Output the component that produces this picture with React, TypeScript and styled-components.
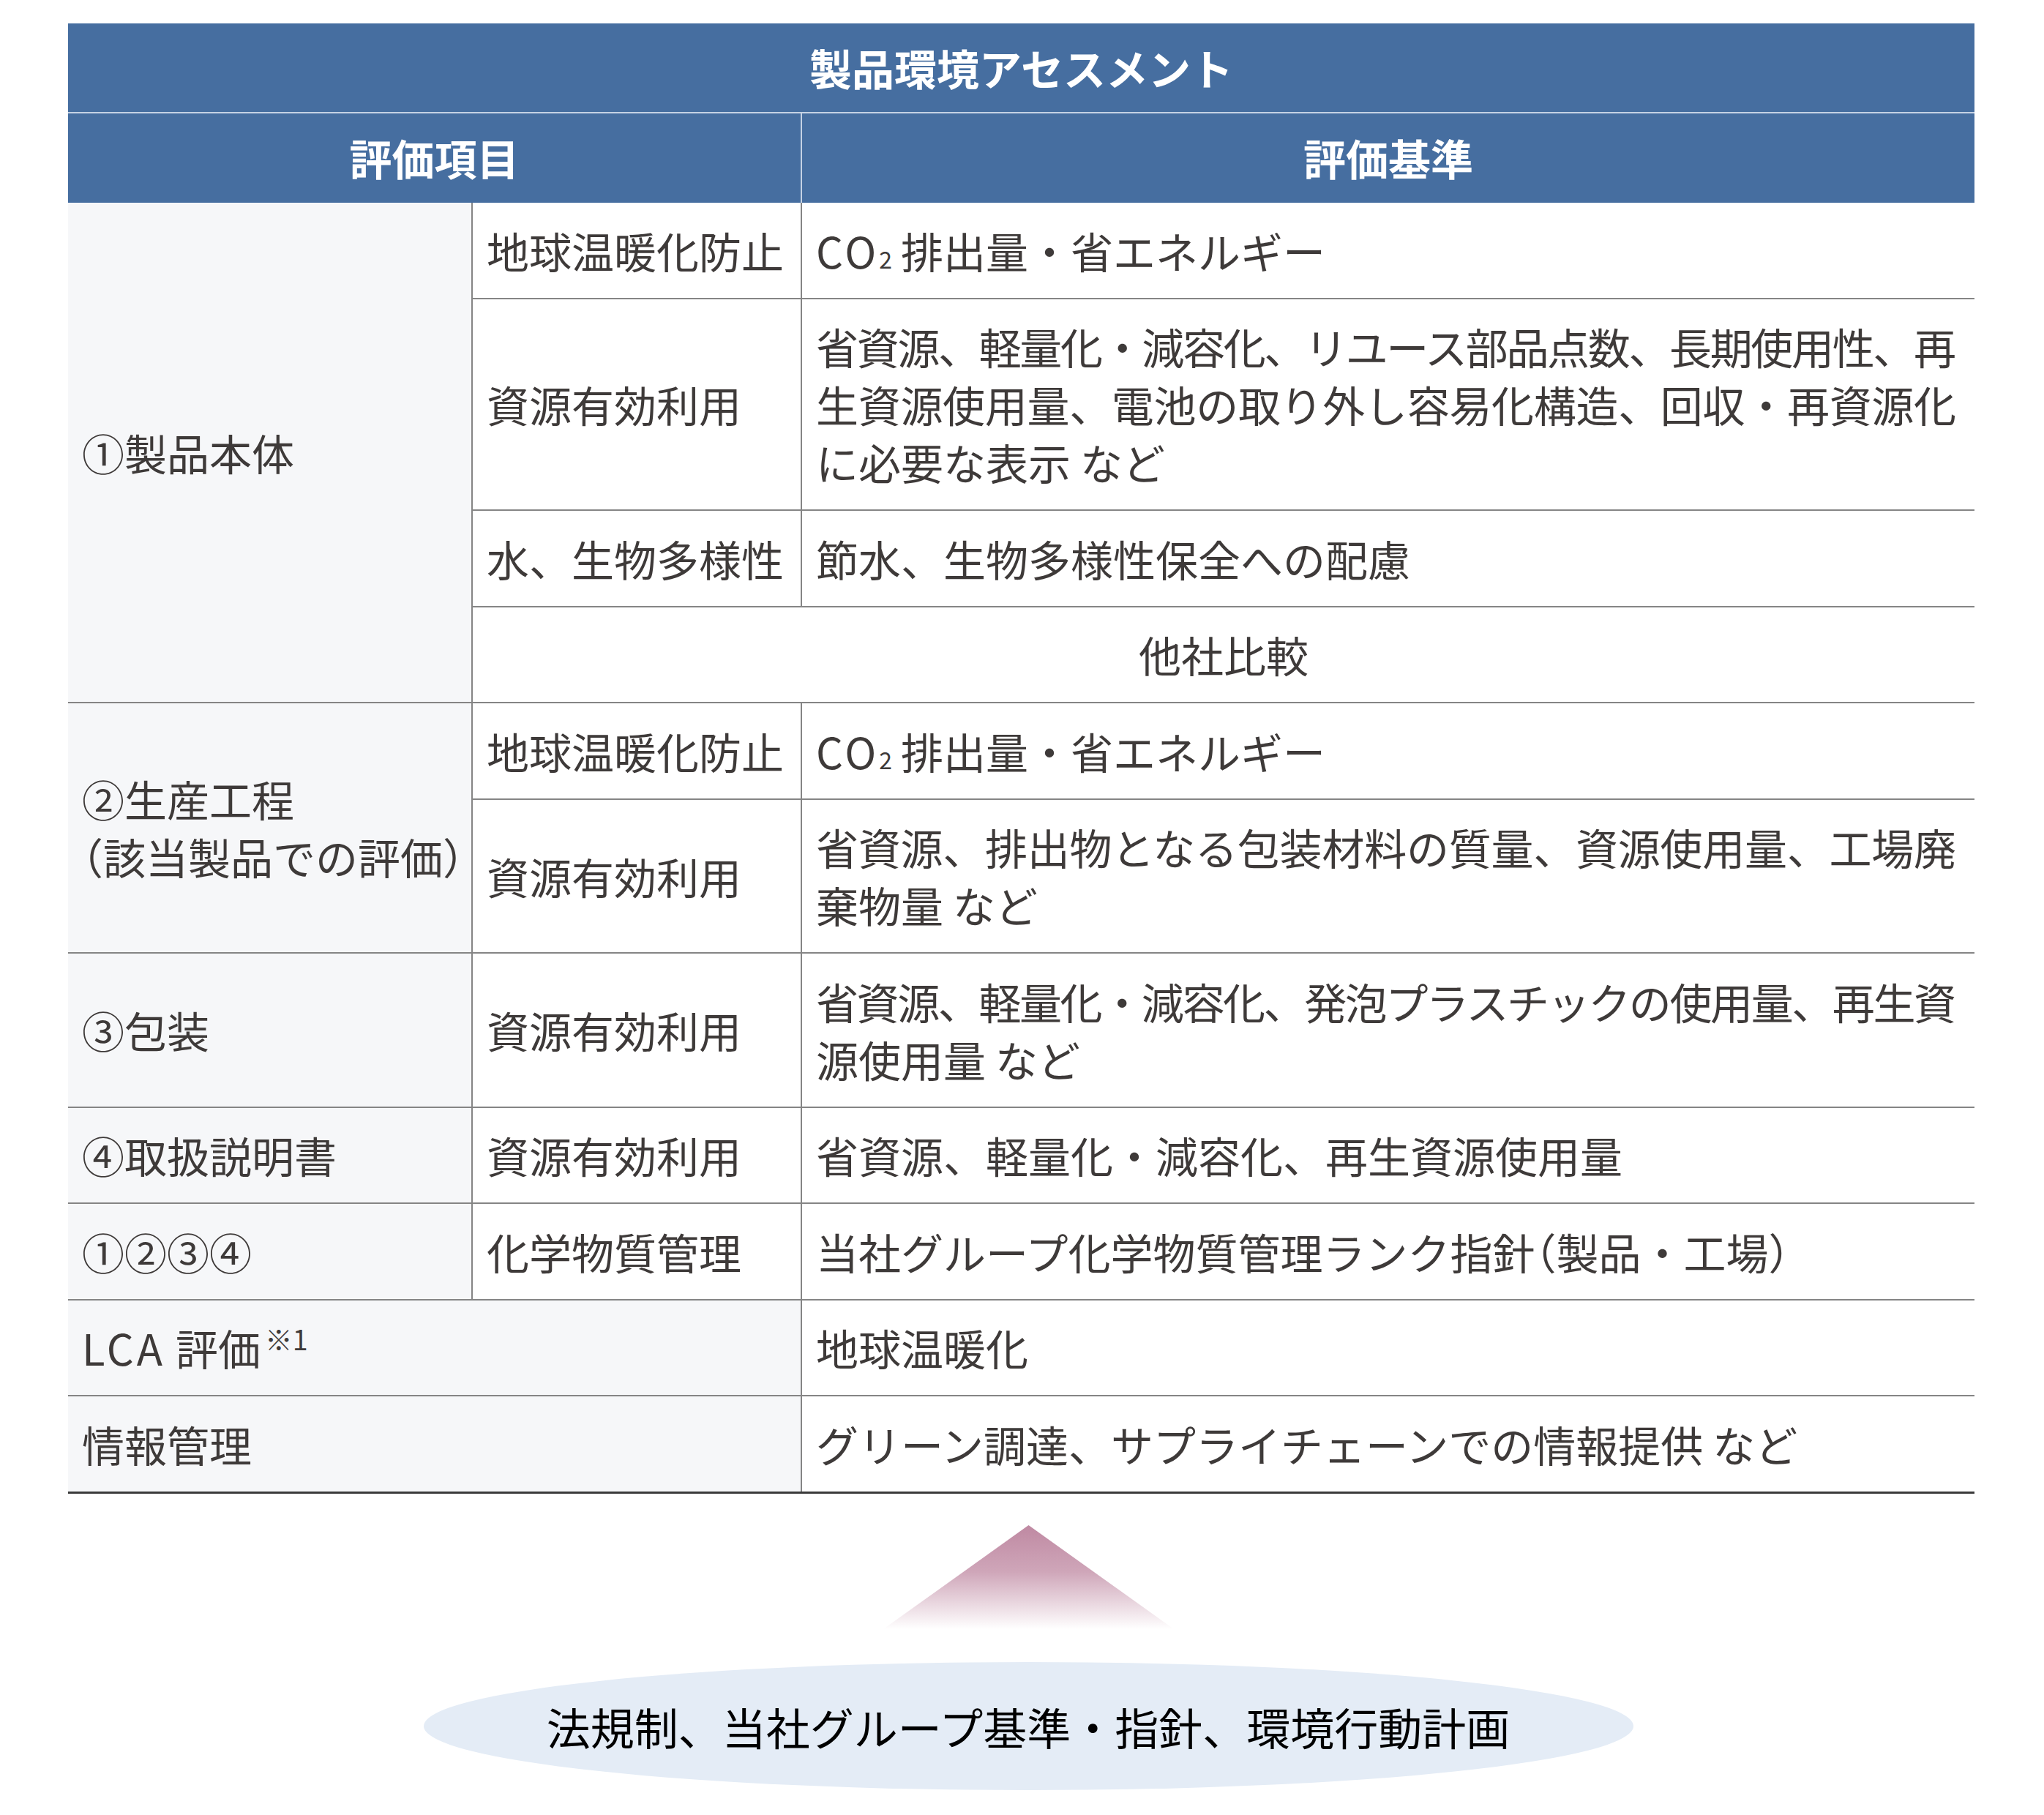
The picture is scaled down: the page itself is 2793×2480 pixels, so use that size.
import styled, { createGlobalStyle, css } from "styled-components";

const GlobalStyle = createGlobalStyle`
  html, body {
    margin: 0;
    padding: 0;
    background: #ffffff;
  }
  body {
    font-family: "Noto Sans CJK JP", "Noto Sans", sans-serif;
    color: #3e3a39;
  }
`;

const Page = styled.div`
  width: 2793px;
  box-sizing: border-box;
  padding: 32px 0 34px 93px;
`;

const Table = styled.table`
  width: 2605px;
  table-layout: fixed;
  border-collapse: collapse;
  font-size: 58px;
  line-height: 79px;
`;

const HeadCell = styled.th<{ $first?: boolean; $divider?: boolean }>`
  background: #466ea0;
  color: #ffffff;
  font-weight: 700;
  text-align: center;
  padding: ${(p) => (p.$first ? "21px 0" : "21px 0 22px")};
  border-bottom: ${(p) => (p.$first ? "2px solid #c5d2e4" : "0")};
  border-left: ${(p) => (p.$divider ? "2px solid #c5d2e4" : "0")};
`;

const Row = styled.tr`
  &:last-child > td {
    border-bottom: 3px solid #3a3a3a;
  }
`;

// 評価項目の左列（薄いグレー）
const GroupCell = styled.td`
  background: #f6f7f9;
  padding: 25.5px 2px 25px 19px;
  vertical-align: middle;
  text-align: left;
  white-space: nowrap;
  border-bottom: 2px solid #858585;
`;

// 評価項目の中列
const ItemCell = styled.td`
  background: #ffffff;
  padding: 25.5px 4px 25px 19px;
  vertical-align: middle;
  text-align: left;
  white-space: nowrap;
  border-bottom: 2px solid #858585;
  border-left: 2px solid #858585;
`;

const Cell = styled.td<{ $center?: boolean }>`
  background: #ffffff;
  padding: ${(p) => (p.$center ? "25.5px 19px 25px" : "25.5px 28px 25px 19px")};
  vertical-align: middle;
  text-align: ${(p) => (p.$center ? "center" : "left")};
  border-bottom: 2px solid #858585;
  border-left: 2px solid #858585;
`;

const Line = styled.span<{ $justify?: boolean }>`
  display: block;
  ${(p) =>
    p.$justify &&
    css`
      text-align: justify;
      text-align-last: justify;
      letter-spacing: -3px;
    `}
`;

const Paren = styled.span`
  font-feature-settings: "halt";
`;

const Latin = styled.span<{ $gap?: number }>`
  letter-spacing: 4px;
  margin-right: ${(p) => p.$gap ?? 0}px;
`;

const Sub = styled.span`
  font-size: 0.55em;
  line-height: 0;
  margin: 0 12px 0 0;
`;

const Note = styled.span`
  font-size: 0.65em;
  line-height: 0;
  vertical-align: 0.55em;
  margin-left: 6px;
`;

const Foundation = styled.div`
  width: 2605px;
  box-sizing: border-box;
  padding-left: 19px;
  display: flex;
  flex-direction: column;
  align-items: center;
`;

const Arrow = styled.svg`
  display: block;
  margin-top: 43px;
`;

const Ellipse = styled.div`
  margin-top: 45px;
  width: 1653px;
  height: 175px;
  border-radius: 50%;
  background: #e4ecf6;
  display: flex;
  align-items: center;
  justify-content: center;
  font-size: 60px;
  font-weight: 400;
  color: #000000;
`;

const CO2 = () => (
  <>
    <Latin>CO</Latin>
    <Sub>2</Sub>排出量・省エネルギー
  </>
);

export default function App() {
  return (
    <Page>
      <GlobalStyle />
      <Table>
        <colgroup>
          <col style={{ width: 552 }} />
          <col style={{ width: 450 }} />
          <col style={{ width: 1603 }} />
        </colgroup>
        <thead>
          <tr>
            <HeadCell $first colSpan={3}>
              製品環境アセスメント
            </HeadCell>
          </tr>
          <tr>
            <HeadCell colSpan={2}>評価項目</HeadCell>
            <HeadCell $divider>評価基準</HeadCell>
          </tr>
        </thead>
        <tbody>
          <Row>
            <GroupCell rowSpan={4}>①製品本体</GroupCell>
            <ItemCell>地球温暖化防止</ItemCell>
            <Cell>
              <CO2 />
            </Cell>
          </Row>
          <Row>
            <ItemCell>資源有効利用</ItemCell>
            <Cell>
              <Line $justify>省資源、軽量化・減容化、リユース部品点数、長期使用性、再</Line>
              <Line $justify>生資源使用量、電池の取り外し容易化構造、回収・再資源化</Line>
              <Line>に必要な表示 など</Line>
            </Cell>
          </Row>
          <Row>
            <ItemCell>水、生物多様性</ItemCell>
            <Cell>節水、生物多様性保全への配慮</Cell>
          </Row>
          <Row>
            <Cell $center colSpan={2}>
              他社比較
            </Cell>
          </Row>
          <Row>
            <GroupCell rowSpan={2}>
              <Line>②生産工程</Line>
              <Line>
                <Paren>（</Paren>該当製品での評価<Paren>）</Paren>
              </Line>
            </GroupCell>
            <ItemCell>地球温暖化防止</ItemCell>
            <Cell>
              <CO2 />
            </Cell>
          </Row>
          <Row>
            <ItemCell>資源有効利用</ItemCell>
            <Cell>
              <Line $justify>省資源、排出物となる包装材料の質量、資源使用量、工場廃</Line>
              <Line>棄物量 など</Line>
            </Cell>
          </Row>
          <Row>
            <GroupCell>③包装</GroupCell>
            <ItemCell>資源有効利用</ItemCell>
            <Cell>
              <Line $justify>省資源、軽量化・減容化、発泡プラスチックの使用量、再生資</Line>
              <Line>源使用量 など</Line>
            </Cell>
          </Row>
          <Row>
            <GroupCell>④取扱説明書</GroupCell>
            <ItemCell>資源有効利用</ItemCell>
            <Cell>省資源、軽量化・減容化、再生資源使用量</Cell>
          </Row>
          <Row>
            <GroupCell>①②③④</GroupCell>
            <ItemCell>化学物質管理</ItemCell>
            <Cell>
              当社グループ化学物質管理ランク指針<Paren>（</Paren>製品・工場<Paren>）</Paren>
            </Cell>
          </Row>
          <Row>
            <GroupCell colSpan={2}>
              <Latin $gap={14}>LCA</Latin>評価<Note>※1</Note>
            </GroupCell>
            <Cell>地球温暖化</Cell>
          </Row>
          <Row>
            <GroupCell colSpan={2}>情報管理</GroupCell>
            <Cell>グリーン調達、サプライチェーンでの情報提供 など</Cell>
          </Row>
        </tbody>
      </Table>

      <Foundation>
        <Arrow width="397" height="142" viewBox="0 0 397 142">
          <defs>
            <linearGradient id="arrowFade" x1="0" y1="0" x2="0" y2="1">
              <stop offset="0" stopColor="#bf89a2" />
              <stop offset="0.45" stopColor="#cfa6b9" />
              <stop offset="1" stopColor="#ffffff" />
            </linearGradient>
          </defs>
          <polygon points="198.5,0 397,142 0,142" fill="url(#arrowFade)" />
        </Arrow>
        <Ellipse>法規制、当社グループ基準・指針、環境行動計画</Ellipse>
      </Foundation>
    </Page>
  );
}
